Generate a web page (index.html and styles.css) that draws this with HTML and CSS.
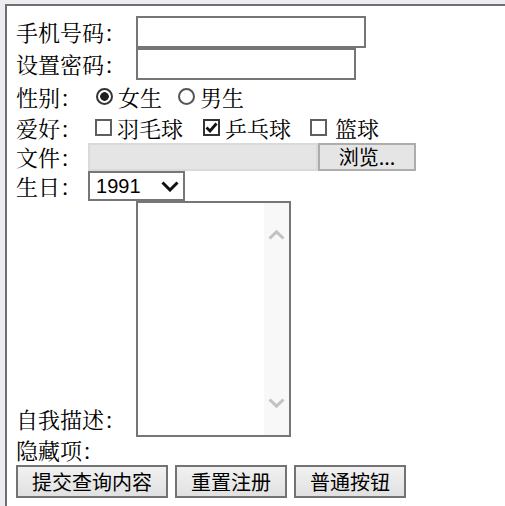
FILE: index.html
```html
<!DOCTYPE html>
<html lang="zh-CN">
<head>
<meta charset="utf-8">
<title>注册</title>
<link rel="stylesheet" href="styles.css">
</head>
<body>
<div class="page">
  <form class="reg">
    <div class="row r-tel">
      <label class="lbl" for="tel">手机号码：</label>
      <input class="txt txt-tel" id="tel" type="text">
    </div>
    <div class="row r-pwd">
      <label class="lbl" for="pwd">设置密码：</label>
      <input class="txt txt-pwd" id="pwd" type="password">
    </div>
    <div class="row r-sex">
      <span class="lbl">性别：</span>
      <input class="radio rd1" type="radio" name="sex" checked>
      <span class="opt o-f">女生</span>
      <input class="radio rd2" type="radio" name="sex">
      <span class="opt o-m">男生</span>
    </div>
    <div class="row r-hobby">
      <span class="lbl">爱好：</span>
      <input class="cb cb1" type="checkbox">
      <span class="opt o-1">羽毛球</span>
      <input class="cb cb2" type="checkbox" checked>
      <span class="opt o-2">乒乓球</span>
      <input class="cb cb3" type="checkbox">
      <span class="opt o-3">篮球</span>
    </div>
    <div class="row r-file">
      <span class="lbl">文件：</span>
      <div class="file">
        <span class="file-path"></span>
        <button class="file-btn" type="button">浏览...</button>
      </div>
    </div>
    <div class="row r-birth">
      <span class="lbl">生日：</span>
      <select class="sel">
        <option>1991</option>
        <option>1992</option>
        <option>1993</option>
      </select>
    </div>
    <div class="row r-desc">
      <span class="lbl lbl-desc">自我描述：</span>
      <div class="ta-wrap">
        <textarea class="ta"></textarea>
        <div class="ta-bar" aria-hidden="true">
          <svg class="chev" width="17" height="10" viewBox="0 0 17 10"><path d="M1.5 8.5 L8.5 1.8 L15.5 8.5" fill="none" stroke="#c2c2c2" stroke-width="3"/></svg>
          <svg class="chev" width="17" height="10" viewBox="0 0 17 10"><path d="M1.5 1.5 L8.5 8.2 L15.5 1.5" fill="none" stroke="#c2c2c2" stroke-width="3"/></svg>
        </div>
      </div>
    </div>
    <div class="row r-hidden">
      <span class="lbl">隐藏项：</span>
      <input type="hidden" name="h" value="1">
    </div>
    <div class="row r-btns">
      <button class="btn btn-submit" type="submit">提交查询内容</button>
      <button class="btn btn-reset" type="reset">重置注册</button>
      <button class="btn btn-plain" type="button">普通按钮</button>
    </div>
  </form>
</div>
</body>
</html>
```

FILE: styles.css
```css
html, body {
  margin: 0;
  padding: 0;
}
body {
  background: #ececf1;
  padding-top: 4px;
  padding-left: 5px;
  height: 506px;
  box-sizing: border-box;
  overflow: hidden;
}
.page {
  background: #fff;
  border-top: 2px solid #6f6f6f;
  border-left: 2px solid #6f6f6f;
  height: 100%;
  box-sizing: border-box;
  padding: 10px 0 0 9px;
  font-family: "Noto Serif CJK SC", "Noto Sans CJK SC", serif;
  font-size: 22px;
  color: #000;
}
.reg {
  margin: 0;
}
.row {
  display: flex;
  align-items: center;
  white-space: nowrap;
}
.lbl {
  line-height: 24px;
}
.r-tel { height: 32px; }
.r-pwd { height: 32px; }
.r-sex { height: 31px; margin-top: 1px; }
.r-hobby { height: 31px; }
.r-file { height: 28px; }
.r-birth { height: 30px; }
.r-desc { height: 236px; align-items: flex-end; }
.r-hidden { height: 26px; }
.r-btns { height: 33px; margin-top: 2px; gap: 7px; }

.txt {
  box-sizing: border-box;
  height: 32px;
  border: 2px solid #767676;
  margin: 0 0 0 10px;
  padding: 0 4px;
  font-size: 18px;
  background: #fff;
  outline: none;
}
.txt-tel { width: 230px; }
.txt-pwd { width: 220px; }

.radio {
  -webkit-appearance: none;
  appearance: none;
  width: 17px;
  height: 17px;
  margin: 0;
  border: 2px solid #555;
  border-radius: 50%;
  box-sizing: border-box;
  background: #fff;
}
.radio:checked {
  border: 2.4px solid #333;
  background: radial-gradient(circle, #1e1e1e 0 4px, #fff 4.6px);
}
.rd1 { margin-left: 14px; }
.rd2 { margin-left: 16px; }
.opt { margin-left: 5px; line-height: 24px; }

.cb {
  -webkit-appearance: none;
  appearance: none;
  width: 17px;
  height: 17px;
  margin: 0;
  border: 2px solid #5f5f5f;
  box-sizing: border-box;
  background: #fff no-repeat center / 13px 11px;
}
.cb:checked {
  border-color: #333;
  background-image: url("data:image/svg+xml,%3Csvg xmlns='http://www.w3.org/2000/svg' viewBox='0 0 13 11'%3E%3Cpath d='M1.5 5.5 L5 9 L11.5 1.5' fill='none' stroke='%23111' stroke-width='2.8'/%3E%3C/svg%3E");
}
.cb1 { margin-left: 13px; }
.cb2 { margin-left: 20px; }
.cb3 { margin-left: 19px; }
.o-3 { margin-left: 8px; }

.file {
  display: flex;
  margin-left: 6px;
  height: 28px;
}
.file-path {
  box-sizing: border-box;
  width: 230px;
  height: 28px;
  background: #e5e5e5;
  border: 2px solid #dadada;
}
.file-btn {
  box-sizing: border-box;
  width: 98px;
  height: 28px;
  margin: 0;
  padding: 0;
  background: #e5e5e5;
  border: 2px solid #adadad;
  font-family: "Noto Sans CJK SC", sans-serif;
  font-size: 20px;
  line-height: 22px;
  color: #000;
}

.sel {
  -webkit-appearance: none;
  appearance: none;
  box-sizing: border-box;
  width: 97px;
  height: 30px;
  margin: 0 0 0 6px;
  padding: 0 0 0 6px;
  border: 2px solid #767676;
  border-radius: 0;
  background: #fff no-repeat right 4px center / 18px 11px;
  background-image: url("data:image/svg+xml,%3Csvg xmlns='http://www.w3.org/2000/svg' viewBox='0 0 18 11'%3E%3Cpath d='M1.5 1.5 L9 9 L16.5 1.5' fill='none' stroke='%23111' stroke-width='3'/%3E%3C/svg%3E");
  font-family: "Liberation Sans", Arial, sans-serif;
  font-size: 20px;
  color: #000;
}

.lbl-desc { margin-bottom: 6px; }
.ta-wrap {
  position: relative;
  margin-left: 10px;
  width: 155px;
  height: 236px;
}
.ta {
  display: block;
  box-sizing: border-box;
  width: 155px;
  height: 236px;
  margin: 0;
  padding: 2px 27px 2px 2px;
  border: 2px solid #767676;
  resize: none;
  overflow: hidden;
  outline: none;
  background: #fff;
}
.ta-bar {
  position: absolute;
  top: 2px;
  right: 2px;
  bottom: 2px;
  width: 25px;
  background: #f8f8f8;
  display: flex;
  flex-direction: column;
  align-items: center;
  justify-content: space-between;
  padding: 27px 0;
  box-sizing: border-box;
}
.chev {
  display: block;
}

.btn {
  box-sizing: border-box;
  height: 33px;
  margin: 0;
  padding: 0;
  border: 2px solid #737373;
  background: linear-gradient(#f1f1f1, #e1e1e1);
  font-family: "Noto Sans CJK SC", sans-serif;
  font-size: 20px;
  line-height: 26px;
  color: #000;
}
.btn-submit { width: 152px; }
.btn-reset { width: 112px; }
.btn-plain { width: 112px; }
```
